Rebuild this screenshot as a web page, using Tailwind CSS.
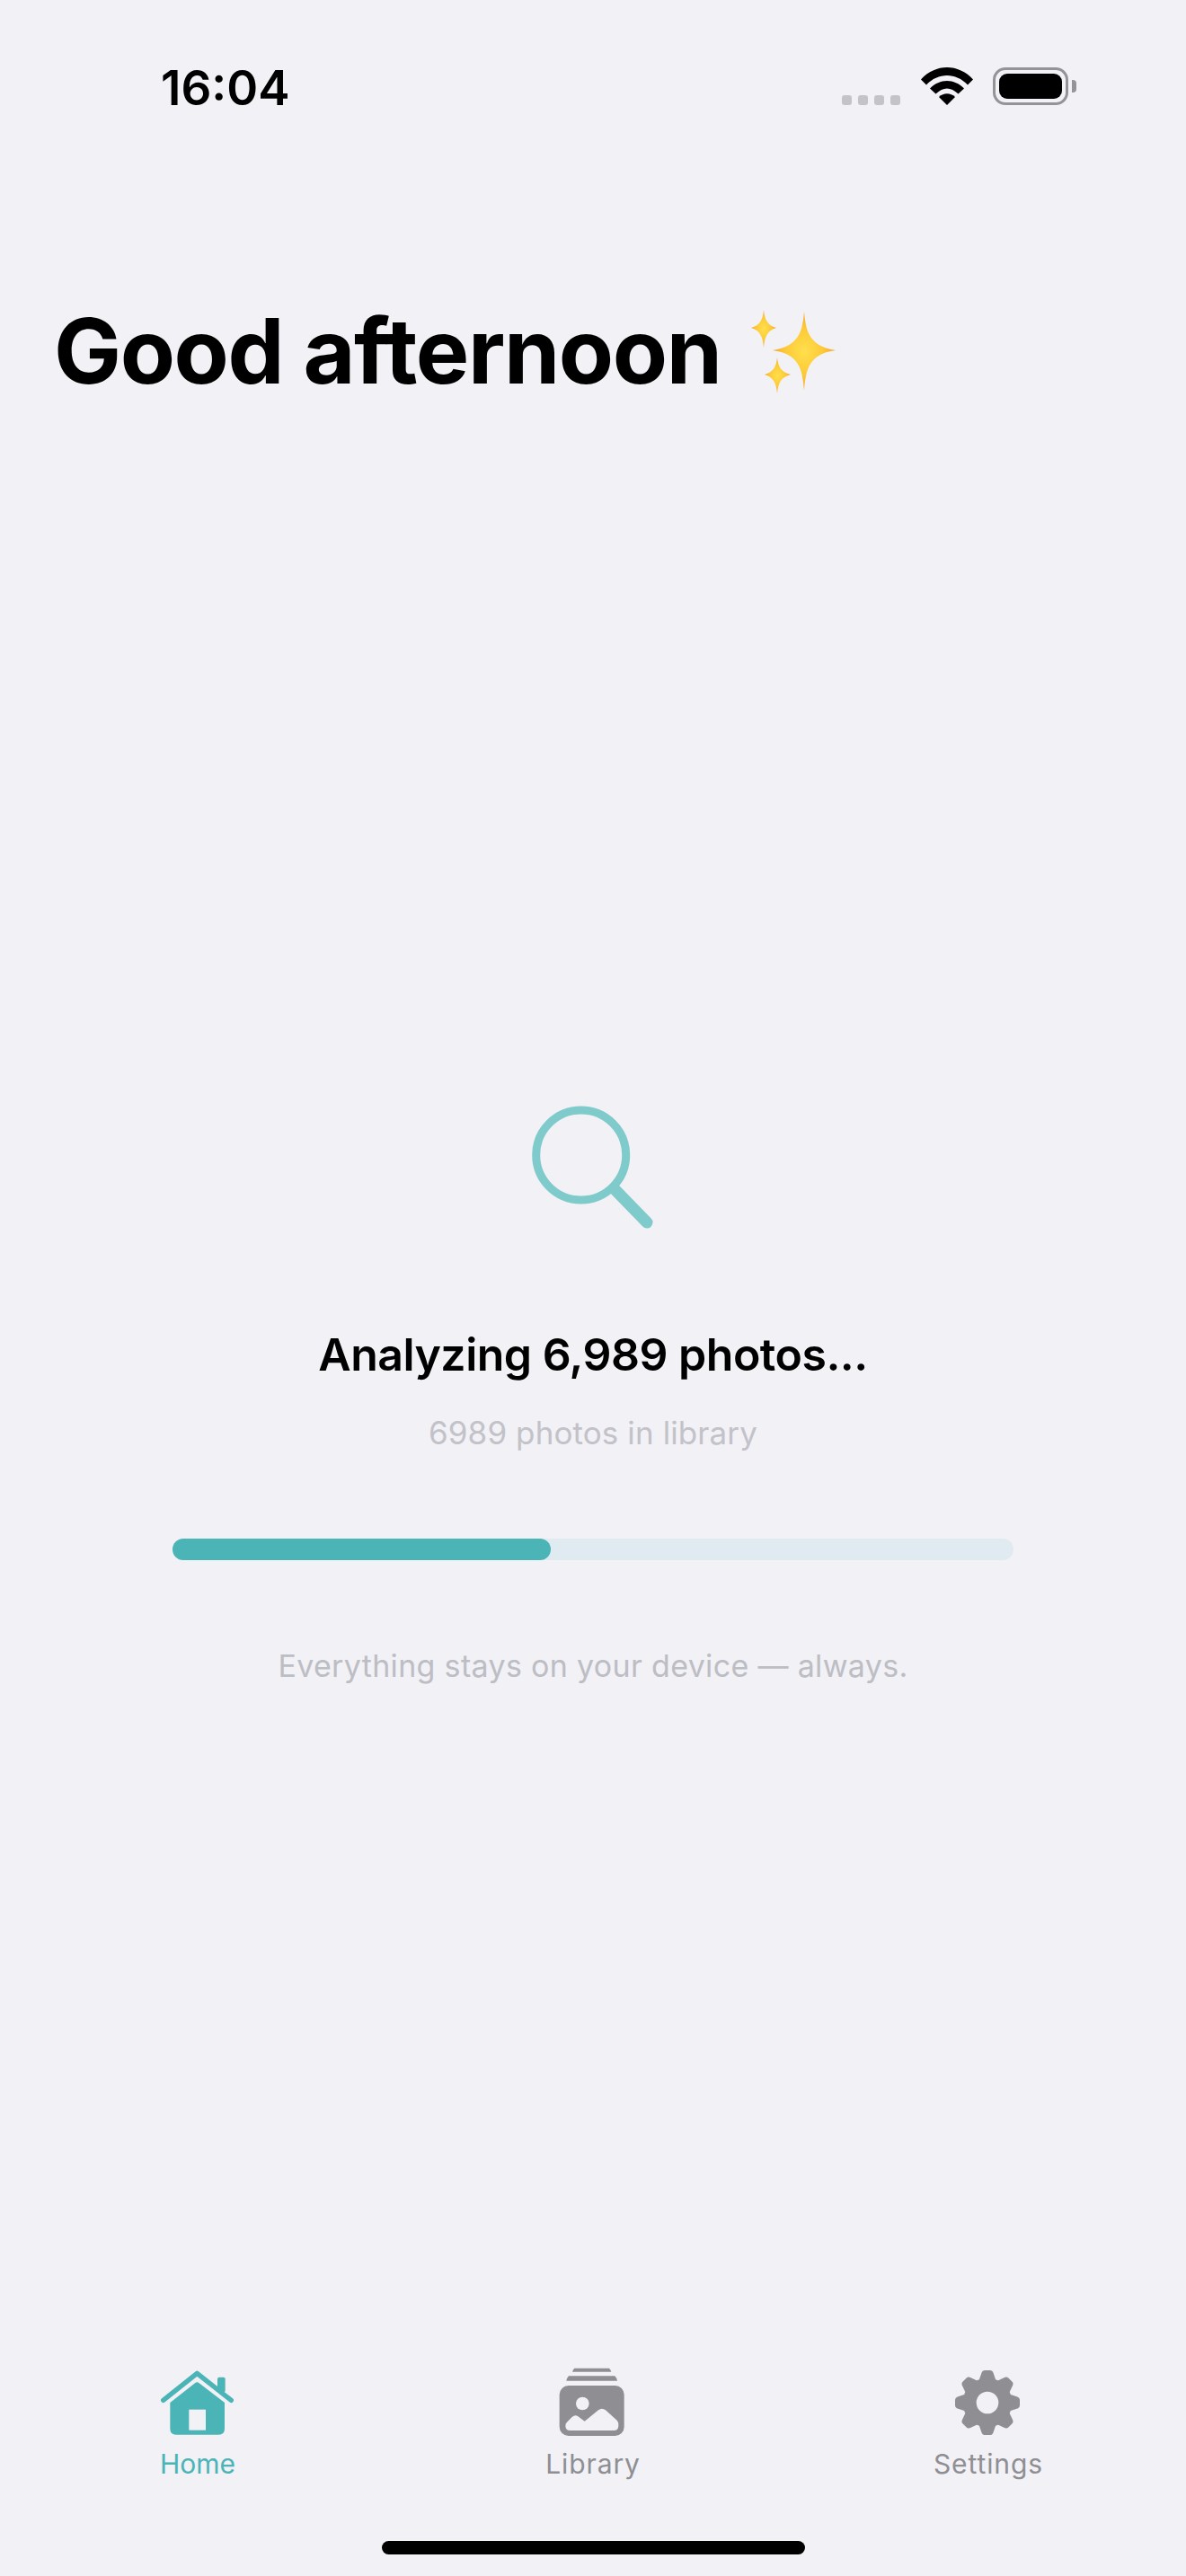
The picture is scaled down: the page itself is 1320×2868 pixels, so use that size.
<!DOCTYPE html>
<html lang="en">
<head>
    <meta charset="UTF-8">
    <meta name="viewport" content="width=device-width, initial-scale=1.0">
    <title>Home</title>
    <script src="https://cdn.jsdelivr.net/npm/@tailwindcss/browser@4"></script>
</head>
<body>
    <div class="w-[1320px] h-[2868px] flex flex-col bg-[#f1f1f6] font-['Inter',sans-serif] overflow-hidden">
        <!-- Status bar -->
        <div class="flex justify-between items-start pt-[72px] pl-[179px] pr-[122px]">
            <span class="text-[53px] leading-[52px] font-semibold text-black">16:04</span>
            <div class="flex items-end mt-[3px]">
                <div class="flex gap-[7px] mb-0">
                    <span class="w-[11px] h-[11px] rounded-[3px] bg-[#c4c4c8]"></span>
                    <span class="w-[11px] h-[11px] rounded-[3px] bg-[#c4c4c8]"></span>
                    <span class="w-[11px] h-[11px] rounded-[3px] bg-[#c4c4c8]"></span>
                    <span class="w-[11px] h-[11px] rounded-[3px] bg-[#c4c4c8]"></span>
                </div>
                <svg class="ml-[23px] w-[58px] h-[42px]" viewBox="0 0 58 42">
                    <path fill="#000" d="M0 13.5 C16 -4.5 42 -4.5 58 13.5 L52 19.5 C39 5.5 19 5.5 6 19.5 Z"/>
                    <path fill="#000" d="M10 23.5 C21 12 37 12 48 23.5 L41.5 29.5 C33 21.5 25 21.5 16.5 29.5 Z"/>
                    <path fill="#000" d="M20 33 C25 28 33 28 38 33 L29 42 Z"/>
                </svg>
                <div class="ml-[22px] w-[84px] h-[42px] rounded-[14px] border-[3px] border-[#939398] p-[4px]">
                    <div class="w-full h-full rounded-[9px] bg-black"></div>
                </div>
                <div class="ml-[4px] mb-[14px] w-[5px] h-[14px] rounded-r-[4px] bg-[#939398]"></div>
            </div>
        </div>

        <!-- Greeting -->
        <div class="flex items-start mt-[217px] pl-[60px]">
            <h1 class="text-[100px] leading-[100px] font-bold tracking-[-1.4px] text-black">Good afternoon</h1>
            <svg class="ml-[31px] mt-[2px] w-[96px] h-[96px]" viewBox="832 343 96 96">
                <defs>
                    <radialGradient id="spark" cx="50%" cy="50%" r="55%">
                        <stop offset="0%" stop-color="#ffdf4d"/>
                        <stop offset="55%" stop-color="#fdc936"/>
                        <stop offset="100%" stop-color="#f49a2c"/>
                    </radialGradient>
                </defs>
                <path fill="url(#spark)" d="M893 347 C895 370 899 385 928 390 C899 394 895 410 893 435 C891 410 887 394 858 390 C887 385 891 370 893 347 Z"/>
                <path fill="url(#spark)" d="M848 345 C849 356 852 362 862 365 C852 368 849 375 848 387 C847 375 844 368 834 365 C844 362 847 356 848 345 Z"/>
                <path fill="url(#spark)" d="M863 398 C864 408 867 414 878 417 C867 420 864 427 863 438 C862 427 859 420 849 417 C859 414 862 408 863 398 Z"/>
            </svg>
        </div>

        <!-- Analyzing state -->
        <div class="flex flex-col items-center mt-[787px]">
            <svg class="w-[140px] h-[140px]" viewBox="590 1228 140 140" fill="none" stroke="#7fcacb">
                <circle cx="646.7" cy="1286" r="50" stroke-width="9"/>
                <path d="M685 1325 L720 1361" stroke-width="13" stroke-linecap="round"/>
            </svg>
            <p class="mt-[110px] text-[50px] leading-[60px] font-semibold tracking-[-0.5px] text-black">Analyzing 6,989 photos...</p>
            <p class="mt-[35px] text-[35px] leading-[44px] tracking-[0.1px] text-[#c2c2c8]">6989 photos in library</p>
            <div class="mt-[96px] w-[936px] h-[24px] rounded-full bg-[#dfebf0]">
                <div class="w-[421px] h-[24px] rounded-[12px] bg-[#4bb4b6]"></div>
            </div>
            <p class="mt-[97px] text-[34px] leading-[42px] tracking-[0.33px] text-[#bdbdc4]">Everything stays on your device — always.</p>
        </div>

        <!-- Tab bar -->
        <div class="mt-auto grid grid-cols-3">
            <div class="flex flex-col items-center gap-[13px]">
                <svg class="w-[90px] h-[76px]" viewBox="75 78 270 228">
                    <rect x="276" y="110" width="26" height="50" rx="6" fill="#4bb4b6"/>
                    <path d="M95 187 L208 97 L322 187" fill="none" stroke="#4bb4b6" stroke-width="16" stroke-linecap="round" stroke-linejoin="round"/>
                    <path fill="#4bb4b6" d="M118 195 L201 130 Q208 124 215 130 L300 195 L300 282 Q300 302 280 302 L138 302 Q118 302 118 282 Z"/>
                    <rect x="181" y="218" width="56" height="69" fill="#f1f1f6"/>
                </svg>
                <span class="text-[30px] leading-[36px] font-normal text-[#4bb4b6]">Home</span>
            </div>
            <div class="flex flex-col items-center gap-[13px]">
                <svg class="w-[90px] h-[76px]" viewBox="105 78 270 228">
                    <path fill="#8e8e93" d="M178 80 L294 80 Q299 84 301 92 L171 92 Q173 84 178 80 Z"/>
                    <path fill="#8e8e93" d="M159 106 L313 106 Q319 112 321 122 L151 122 Q153 112 159 106 Z"/>
                    <rect x="128" y="138" width="216" height="168" rx="30" fill="#8e8e93"/>
                    <circle cx="205" cy="198" r="22" fill="#f1f1f6"/>
                    <path fill="#f1f1f6" d="M148 272 Q148 265 153 260 L170 243 Q180 234 190 241 L212 257 L258 220 Q270 211 282 220 L320 254 Q325 259 325 268 L325 272 Q325 288 309 288 L164 288 Q148 288 148 272 Z"/>
                </svg>
                <span class="text-[30px] leading-[36px] font-normal tracking-[0.9px] text-[#8e8e93]">Library</span>
            </div>
            <div class="flex flex-col items-center gap-[13px]">
                <svg class="w-[90px] h-[76px]" viewBox="105 78 270 228">
                    <g transform="translate(237 195)" fill="#8e8e93">
                        <circle r="82"/>
                        <path d="M-28 -75 L-20 -98 Q-17 -108 -8 -108 L8 -108 Q17 -108 20 -98 L28 -75 Z"/>
                        <path transform="rotate(45)" d="M-28 -75 L-20 -98 Q-17 -108 -8 -108 L8 -108 Q17 -108 20 -98 L28 -75 Z"/>
                        <path transform="rotate(90)" d="M-28 -75 L-20 -98 Q-17 -108 -8 -108 L8 -108 Q17 -108 20 -98 L28 -75 Z"/>
                        <path transform="rotate(135)" d="M-28 -75 L-20 -98 Q-17 -108 -8 -108 L8 -108 Q17 -108 20 -98 L28 -75 Z"/>
                        <path transform="rotate(180)" d="M-28 -75 L-20 -98 Q-17 -108 -8 -108 L8 -108 Q17 -108 20 -98 L28 -75 Z"/>
                        <path transform="rotate(225)" d="M-28 -75 L-20 -98 Q-17 -108 -8 -108 L8 -108 Q17 -108 20 -98 L28 -75 Z"/>
                        <path transform="rotate(270)" d="M-28 -75 L-20 -98 Q-17 -108 -8 -108 L8 -108 Q17 -108 20 -98 L28 -75 Z"/>
                        <path transform="rotate(315)" d="M-28 -75 L-20 -98 Q-17 -108 -8 -108 L8 -108 Q17 -108 20 -98 L28 -75 Z"/>
                        <circle r="37" fill="#f1f1f6"/>
                    </g>
                </svg>
                <span class="text-[30px] leading-[36px] font-normal tracking-[0.9px] text-[#8e8e93]">Settings</span>
            </div>
        </div>

        <!-- Home indicator -->
        <div class="mt-[68px] mb-[24px] mx-auto w-[471px] h-[15px] rounded-full bg-black"></div>
    </div>
</body>
</html>
